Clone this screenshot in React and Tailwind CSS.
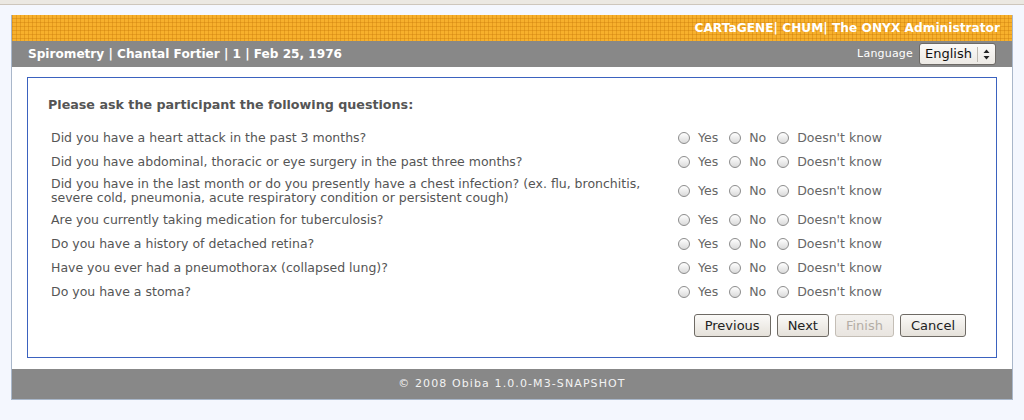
import React from "react";

const questions = [
  "Did you have a heart attack in the past 3 months?",
  "Did you have abdominal, thoracic or eye surgery in the past three months?",
  "Did you have in the last month or do you presently have a chest infection? (ex. flu, bronchitis, severe cold, pneumonia, acute respiratory condition or persistent cough)",
  "Are you currently taking medication for tuberculosis?",
  "Do you have a history of detached retina?",
  "Have you ever had a pneumothorax (collapsed lung)?",
  "Do you have a stoma?",
];

function Radio() {
  return (
    <span className="inline-block w-[12px] h-[12px] rounded-full border border-[#8c8c8c] bg-[linear-gradient(#ffffff,#dadada)] shrink-0" />
  );
}

function Option({ label, last }) {
  return (
    <span className={"flex items-center gap-[8px] " + (last ? "" : "mr-[11px]")}>
      <Radio />
      <span className="text-[#666]">{label}</span>
    </span>
  );
}

function Btn({ children, disabled }) {
  return (
    <button
      className={
        "h-[23px] px-[10px] rounded-[3px] border text-[13px] leading-none font-['DejaVu_Sans',sans-serif] " +
        (disabled
          ? "border-[#c4beb6] text-[#b4aea6] bg-[linear-gradient(#f3f1ee,#e9e5e0)]"
          : "border-[#6e6a64] text-[#222] bg-[linear-gradient(#fbfaf8,#e5e1da)]")
      }
    >
      {children}
    </button>
  );
}

export default function App() {
  return (
    <div className="w-[1024px] h-[420px] bg-[#f4f7fe] overflow-hidden font-['DejaVu_Sans',sans-serif]">
      <div className="h-[5px] bg-[#ebe8e2] border-b border-[#cdc6bc]" />
      <div className="ml-[11px] mt-[10px] w-[1002px] border-x border-b border-[#a9b7ca] bg-white">
        <div className="h-[26px] flex items-center justify-end pr-[12px] bg-[#f7b02c] bg-[linear-gradient(90deg,rgba(190,110,0,0.3)_1px,transparent_1px),linear-gradient(0deg,rgba(190,110,0,0.3)_1px,transparent_1px)] bg-size-[4px_4px]">
          <span className="text-white font-bold text-[12.2px]">CARTaGENE| CHUM| The ONYX Administrator</span>
        </div>
        <div className="h-[26px] bg-[#888888] flex items-center justify-between pl-[16px] pr-[16px]">
          <span className="text-white font-bold text-[12.1px]">Spirometry | Chantal Fortier | 1 | Feb 25, 1976</span>
          <div className="flex items-center gap-[6px]">
            <span className="text-white text-[11px] tracking-[0.2px]">Language</span>
            <div className="h-[22px] w-[77px] rounded-[3px] border border-[#6d6a66] bg-[linear-gradient(#fbfaf8,#ece9e4)] flex items-center">
              <span className="pl-[5px] text-[13px] text-[#111] flex-1">English</span>
              <span className="w-px h-[15px] bg-[#bdb8b0]" />
              <span className="w-[17px] flex justify-center">
                <svg width="7" height="11" viewBox="0 0 7 11">
                  <path d="M3.5 0.5 L6.5 4 L0.5 4 Z" fill="#222" />
                  <path d="M3.5 10.5 L6.5 7 L0.5 7 Z" fill="#222" />
                </svg>
              </span>
            </div>
          </div>
        </div>
        <div className="px-[15px] pt-[10px] pb-[11px]">
          <div className="border border-[#3b62bf] pl-[20px] pr-[30px] pt-[19px] pb-[20px]">
            <div className="text-[12.7px] font-bold text-[#555] leading-[16px] mb-[13px]">
              Please ask the participant the following questions:
            </div>
            <div className="flex flex-col text-[12.5px]">
              {questions.map((q, i) => (
                <div key={i} className="flex items-center py-[3px] pl-[3px]">
                  <div className="w-[610px] leading-[14px] text-[#555] mr-[17px]">{q}</div>
                  <div className="flex items-center h-[18px]">
                    <Option label="Yes" />
                    <Option label="No" />
                    <Option label="Doesn't know" last />
                  </div>
                </div>
              ))}
            </div>
            <div className="flex justify-end gap-[6px] mt-[10px]">
              <Btn>Previous</Btn>
              <Btn>Next</Btn>
              <Btn disabled>Finish</Btn>
              <Btn>Cancel</Btn>
            </div>
          </div>
        </div>
        <div className="h-[30px] bg-[#888888] flex items-center justify-center">
          <span className="text-[#f2f2f2] text-[11px] tracking-[1.1px]">© 2008 Obiba 1.0.0-M3-SNAPSHOT</span>
        </div>
      </div>
    </div>
  );
}
